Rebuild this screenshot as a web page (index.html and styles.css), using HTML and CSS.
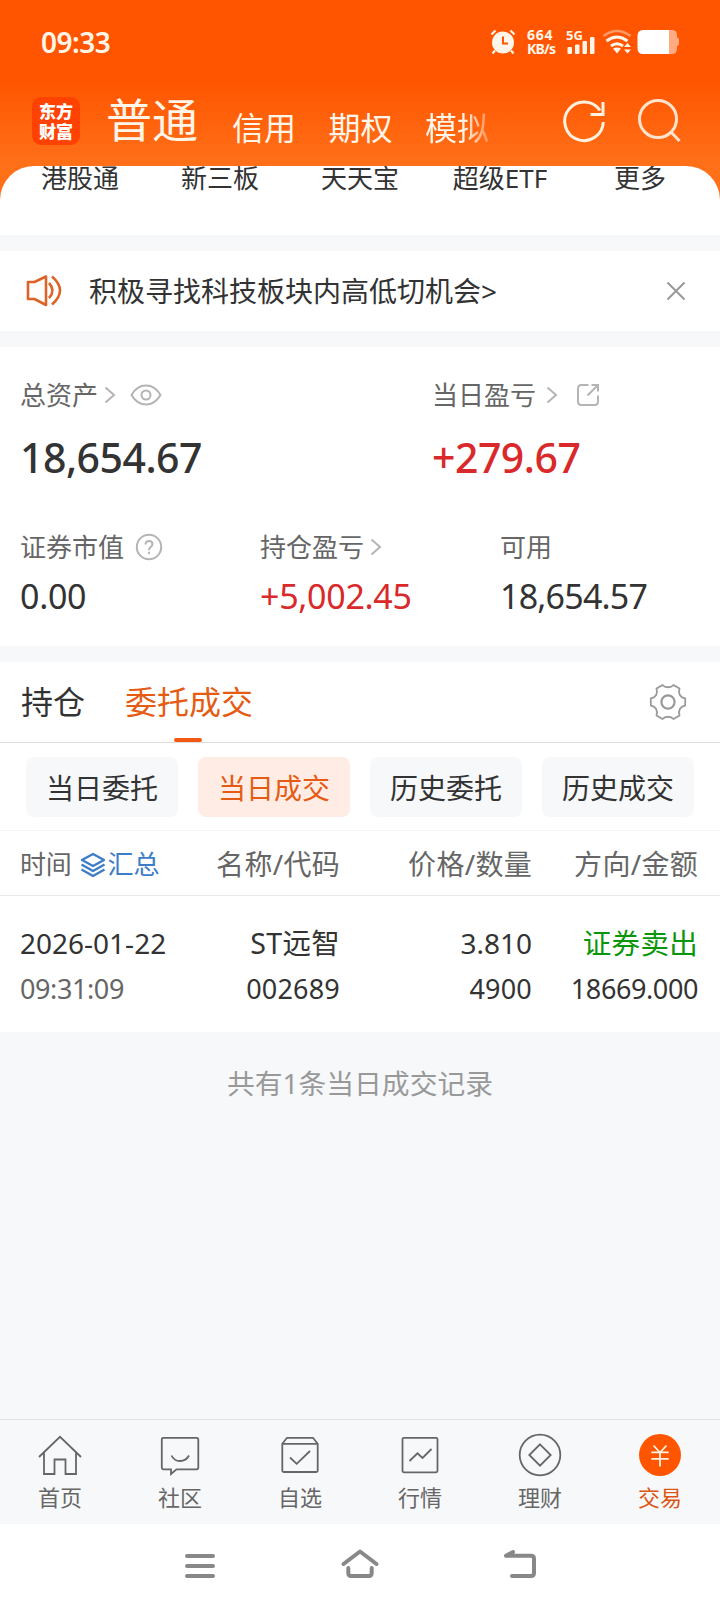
FILE: index.html
```html
<!DOCTYPE html>
<html lang="zh-CN">
<head>
    <meta charset="UTF-8">
    <title>交易</title>
    <link rel="stylesheet" href="styles.css">
</head>
<body>
    <div class="header">
        <div class="status">
            <span class="time">09:33</span>
            <svg class="alarm" width="26" height="26" viewBox="0 0 26 26">
                <circle cx="13" cy="13.5" r="11" fill="#fff5e8"/>
                <path d="M1.500 5.500L5.500 1.500M20.500 1.500L24.500 5.500M5 21.500L2.500 24.500M21 21.500L23.500 24.500" stroke="#fff5e8" stroke-width="2.200"/>
                <path d="M13 7.500V14.500H18" fill="none" stroke="#ff5500" stroke-width="2"/>
            </svg>
            <div class="speed"><b>664</b><b>KB/s</b></div>
            <div class="signal">
                <b>5G</b>
                <svg width="30" height="26" viewBox="0 0 30 26" fill="#fff5e8">
                    <rect x="1.500" y="18" width="4.500" height="7" rx="1"/>
                    <rect x="9" y="15.500" width="4.500" height="9.500" rx="1"/>
                    <rect x="16.500" y="12" width="4.500" height="13" rx="1"/>
                    <rect x="24" y="8" width="4.500" height="17" rx="1"/>
                </svg>
            </div>
            <svg class="wifi" width="30" height="26" viewBox="0 0 30 26" fill="none" stroke="#fff5e8" stroke-width="3">
                <path d="M1.500 7Q15 -3 28.500 7" stroke="#ff9a66" stroke-width="2.500"/>
                <path d="M4.500 12Q15 4 25.500 12M9 17Q15 12.500 21 17"/>
                <path d="M11 19.500Q15 17.500 19 19.500L15 24.500Z" fill="#fff5e8" stroke="none"/>
                <path d="M22 18L25.500 14L29 18ZM22 20.500L25.500 24.500L29 20.500Z" fill="#fff5e8" stroke="none"/>
            </svg>
            <svg class="battery" width="43" height="26" viewBox="0 0 43 26">
                <path d="M32 1H35Q40 1 40 6V8.500Q42 8.500 42 10.500V15Q42 17 40 17V20Q40 25 35 25H32Z" fill="#ffaa80"/>
                <path d="M6 1H32V25H6Q0.500 25 0.500 19V7Q0.500 1 6 1Z" fill="#fff"/>
            </svg>
        </div>
        <div class="topbar">
            <div class="logo"><span>东方</span><span>财富</span></div>
            <div class="accounts">
                <a class="current">普通</a>
                <a>信用</a>
                <a>期权</a>
                <a class="fade">模拟</a>
            </div>
            <svg class="refresh" width="48" height="48" viewBox="0 0 48 48" fill="none" stroke="#fff1e0" stroke-width="3">
                <path d="M43.300 25A19.300 19.300 0 1 1 40 13.500"/>
                <path d="M43 5V17.500H30.500"/>
            </svg>
            <svg class="search" width="48" height="48" viewBox="0 0 48 48" fill="none" stroke="#ffe3cc" stroke-width="3">
                <circle cx="22" cy="22" r="18.500"/>
                <path d="M34.500 34.500L43.500 44"/>
            </svg>
        </div>
    </div>

    <div class="menu">
        <a>港股通</a><a>新三板</a><a>天天宝</a><a>超级ETF</a><a>更多</a>
    </div>

    <div class="notice">
        <svg width="38" height="34" viewBox="0 0 38 34" fill="none" stroke="#dc6428" stroke-width="2.600" stroke-linejoin="round">
            <path d="M2 8H8.500L20 2.500V31L8.500 25H2Z"/>
            <path d="M23 9Q30 16.500 23 24M26 2.500Q42 16.500 26 30.500"/>
        </svg>
        <p>积极寻找科技板块内高低切机会&gt;</p>
        <svg width="20" height="20" viewBox="0 0 20 20" stroke="#999" stroke-width="2">
            <path d="M1.500 1.500L18.500 18.500M18.500 1.500L1.500 18.500"/>
        </svg>
    </div>

    <div class="assets">
        <div class="total">
            <div>
                <h3>总资产
                    <svg class="arrow near" width="12" height="18" viewBox="0 0 12 18"><path d="M1.500 1.500L10 9L1.500 16.500"/></svg>
                    <svg class="eye" width="32" height="22" viewBox="0 0 32 22"><path d="M1.500 11Q7 1.500 16 1.500T30.500 11Q25 20.500 16 20.500T1.500 11Z"/><circle cx="16" cy="11" r="4.500"/></svg>
                </h3>
                <p>18,654.67</p>
            </div>
            <div>
                <h3>当日盈亏
                    <svg class="arrow" width="12" height="18" viewBox="0 0 12 18"><path d="M1.500 1.500L10 9L1.500 16.500"/></svg>
                    <svg class="share" width="24" height="24" viewBox="0 0 24 24"><path d="M12.500 2H5.500Q2 2 2 5.500V18.500Q2 22 5.500 22H18.500Q22 22 22 18.500V12.500M11.500 12.500L21.500 2.500M15.500 2H22V8.500"/></svg>
                </h3>
                <p class="red">+279.67</p>
            </div>
        </div>
        <div class="detail">
            <div>
                <h3>证券市值
                    <svg class="help" width="28" height="28" viewBox="0 0 28 28"><circle cx="14" cy="14" r="12.200"/><path d="M10.500 11.500Q10.500 8 14 8T17.500 11.300C17.500 14 14 13.700 14 17.200M14 18.800V21"/></svg>
                </h3>
                <p>0.00</p>
            </div>
            <div>
                <h3>持仓盈亏
                    <svg class="arrow near" width="12" height="18" viewBox="0 0 12 18"><path d="M1.500 1.500L10 9L1.500 16.500"/></svg>
                </h3>
                <p class="red">+5,002.45</p>
            </div>
            <div>
                <h3>可用</h3>
                <p>18,654.57</p>
            </div>
        </div>
    </div>

    <div class="tabs">
        <a>持仓</a>
        <a class="on">委托成交</a>
        <svg width="40" height="40" viewBox="0 0 40 40" fill="none" stroke="#999" stroke-width="1.800" stroke-linejoin="round">
            <circle cx="20" cy="20" r="6.600" stroke-width="2.200"/>
            <path d="M14.500 3C17 6 23 6 25.500 3L31.500 6.500C30 11.500 32 15.500 37.200 16.500V23.500C32 24.500 30 28.500 31.500 33.500L25.500 37C23 34 17 34 14.500 37L8.500 33.500C10 28.500 8 24.500 2.800 23.500V16.500C8 15.500 10 11.500 8.500 6.500Z"/>
        </svg>
    </div>

    <div class="filters">
        <a>当日委托</a><a class="on">当日成交</a><a>历史委托</a><a>历史成交</a>
    </div>

    <div class="grid thead">
        <div class="when">时间
            <span class="sum">
                <svg width="26" height="26" viewBox="0 0 26 26" fill="none" stroke="#3d7dc8" stroke-width="2.400" stroke-linejoin="round">
                    <path d="M13 2L24 8L13 14L2 8ZM1.500 12.500L13 19L24.500 12.500M1.500 17.500L13 24L24.500 17.500"/>
                </svg>汇总</span>
        </div>
        <div>名称/代码</div>
        <div>价格/数量</div>
        <div>方向/金额</div>
    </div>
    <div class="grid deal">
        <div><p class="date">2026-01-22</p><p class="gray">09:31:09</p></div>
        <div><p class="name">ST远智</p><p class="num">002689</p></div>
        <div><p class="price">3.810</p><p class="num">4900</p></div>
        <div><p class="green">证券卖出</p><p>18669.000</p></div>
    </div>
    <p class="count">共有1条当日成交记录</p>

    <div class="tabbar">
        <a><svg viewBox="0 0 48 48"><path d="M3 26L24 5.800L45 26M8 22V43H18.500V28.500H29.500V43H40V22"/></svg>首页</a>
        <a><svg viewBox="0 0 48 48"><path d="M7.500 6.800H40.500Q42.300 6.800 42.300 8.500V36.500Q42.300 38.300 40.500 38.300H20.500L15 43V38.300H7.500Q5.800 38.300 5.800 36.500V8.500Q5.800 6.800 7.500 6.800ZM15.500 24.500Q18 30 24 30T33 24.500"/></svg>社区</a>
        <a><svg viewBox="0 0 48 48"><path d="M6.300 12.800L11 6.800H37L41.700 12.800V39.500Q41.700 41 40 41H8Q6.300 41 6.300 39.500ZM6.300 12.800H41.700M14 26.500L20.700 32.800L34 20"/></svg>自选</a>
        <a><svg viewBox="0 0 48 48"><rect x="6.500" y="6.800" width="35" height="34.500" rx="1.500"/><path d="M13.500 30L21.500 22.300L26.500 27L35.500 18"/></svg>行情</a>
        <a><svg viewBox="0 0 48 48"><circle cx="24" cy="24" r="20.300"/><path d="M24 13.300L34.700 24L24 34.700L13.300 24Z"/></svg>理财</a>
        <a class="on"><svg viewBox="0 0 48 48"><circle cx="24" cy="24" r="21"/><path d="M17.500 14.500L24 21.500L30.500 14.500M24 21.500V35.500M15.300 21.300H32.700M15.300 27.800H32.700"/></svg>交易</a>
    </div>
    <div class="navbar">
        <svg viewBox="0 0 48 48"><path d="M11 14H37M11 24H37M11 34H37"/></svg>
        <svg viewBox="0 0 48 48"><path d="M7.500 22L24 9.500L40.500 22M12.300 26V31Q12.300 34 15.300 34H32.700Q35.700 34 35.700 31V26"/></svg>
        <svg viewBox="0 0 48 48"><path d="M17 10L10 13.800H35Q38 13.800 38 16.800V31Q38 34 35 34H16"/></svg>
    </div>
</body>
</html>
```
FILE: styles.css
```css
body, h3, p{margin: 0;padding: 0;font-weight: 400;}
body{display: flex;flex-direction: column;width: 720px;height: 1608px;overflow: hidden;background: #f7f8fa;color: #333;font-family: "Noto Sans", "Noto Sans CJK SC", sans-serif;}
svg{display: block;flex: none;}

/* header */
.header{height: 200px;flex: none;background: linear-gradient(#ff5500 80px, #ff7019 166px);color: #fff5e8;}
.status{display: flex;align-items: center;height: 84px;padding-left: 41px;}
.time{width: 449px;font-size: 28px;line-height: 82px;font-weight: 600;letter-spacing: -0.5px;}
.speed{flex: none;width: 32px;margin-left: 11px;font-size: 14px;line-height: 14px;}
.speed b{display: block;font-weight: 700;}
.speed b:first-child{letter-spacing: 0.8px;}
.speed b:last-child{letter-spacing: -0.8px;}
.signal{position: relative;margin-left: 7px;}
.signal b{position: absolute;left: 0;top: -1px;font-size: 13px;line-height: 14px;}
.wifi{margin-left: 6px;}
.battery{margin-left: 5px;}
.topbar{display: flex;align-items: center;height: 74px;padding-left: 32px;}
.logo{display: flex;flex: none;flex-direction: column;justify-content: center;width: 48px;height: 48px;border-radius: 9px;background: #ff4200;text-align: center;font: 900 17px/20px "Noto Sans CJK SC", sans-serif;color: #fff;}
.accounts{display: flex;flex: none;gap: 32.5px;width: 407px;margin-left: 26px;padding-top: 14px;}
.accounts a{font-size: 32px;line-height: 92px;}
.accounts .current{margin-right: 1.5px;font-size: 46px;line-height: 75px;}
.fade{-webkit-mask-image: linear-gradient(90deg, #000 60%, rgba(0,0,0,.3));mask-image: linear-gradient(90deg, #000 60%, rgba(0,0,0,.3));}
.refresh{margin: 0 0 1px 47px;}
.search{margin: 0 0 1px 28px;}

.menu{display: flex;flex: none;height: 69px;margin-top: -34px;padding: 0 10px;border-radius: 34px 34px 0 0;background: #fff;overflow: hidden;}
.menu a{width: 140px;text-align: center;font-size: 26px;line-height: 25px;}

.notice{display: flex;align-items: center;flex: none;height: 80px;margin: 16px 0;padding: 0 34px 0 26px;background: #fff;}
.notice p{flex: 1;margin-left: 25px;font-size: 28px;line-height: 82px;}

/* assets */
.assets{flex: none;height: 299px;background: #fff;}
.assets h3{display: flex;align-items: center;height: 36px;font-size: 26px;line-height: 36px;color: #666;}
.assets svg{fill: none;stroke: #b4b4b4;stroke-width: 2;}
.arrow{margin-left: 10px;}
.near{margin-left: 6px;}
.eye{margin-left: 14px;}
.share{margin-left: 18px;}
.help{margin-left: 11px;}
.total{display: flex;padding: 30px 0 0 20px;}
.total div{flex: none;width: 412px;}
.total div:last-child{width: 280px;}
.total p{margin-top: 15px;font-size: 41px;line-height: 58px;font-weight: 500;letter-spacing: -0.5px;}
.detail{display: flex;padding: 43px 0 0 20px;}
.detail div{flex: none;width: 240px;}
.detail div:last-child{width: 200px;}
.detail p{margin-top: 8px;font-size: 34px;line-height: 46px;letter-spacing: -0.3px;}
.detail div:last-child p{letter-spacing: -0.8px;}
.assets .red{color: #d9292b;}

/* tabs */
.tabs{display: flex;align-items: center;flex: none;gap: 40px;height: 80px;margin-top: 16px;padding: 0 32px 0 21px;border-bottom: 1px solid #ddd;background: #fff;font-size: 32px;line-height: 82px;}
.tabs svg{margin-left: auto;}
.tabs .on{position: relative;color: #e55b13;}
.tabs .on:after{content: "";position: absolute;left: 49px;bottom: 1px;width: 28px;height: 4px;border-radius: 2px;background: #f25a14;}
.filters{display: flex;flex: none;gap: 20px;height: 60px;padding: 14px 26px 13px;border-bottom: 1px solid #f5f5f7;background: #fff;}
.filters a{width: 152px;border-radius: 8px;background: #f7f8fa;text-align: center;font-size: 28px;line-height: 63px;}
.filters .on{background: #ffede5;color: #e55b13;}

/* deals */
.grid{display: grid;flex: none;grid-template-columns: 180px 140px 192px 166px;padding: 0 22px 0 20px;background: #fff;text-align: right;}
.grid div:first-child{text-align: left;}
.thead{height: 64px;border-bottom: 1px solid #eaeaec;font-size: 28px;line-height: 67px;letter-spacing: 0.3px;color: #666;}
.when{display: flex;font-size: 26px;letter-spacing: -0.2px;}
.sum{display: flex;align-items: center;height: 67px;margin-left: 8px;color: #3d7dc8;}
.sum svg{margin-right: 2px;}
.deal{height: 112px;padding-top: 24px;font-size: 27px;line-height: 46px;letter-spacing: -0.4px;}
.deal .date, .deal .price{font-size: 28px;letter-spacing: 0;}
.deal .name, .deal .green{font-size: 28.5px;letter-spacing: 0.3px;}
.deal .num{letter-spacing: 0.2px;}
.gray{color: #666;}
.green{color: #0a960a;}
.count{flex: 1;text-align: center;font-size: 27.8px;line-height: 103px;color: #999;}

/* bottom */
.tabbar{display: flex;flex: none;height: 104px;border-top: 1px solid #dfe1e4;background: #f7f8fa;}
.tabbar a{width: 120px;padding-top: 11px;text-align: center;font-size: 22px;line-height: 37px;color: #666;}
.tabbar svg{width: 48px;height: 48px;margin: 0 auto;fill: none;stroke: #666;stroke-width: 1.800;}
.tabbar .on{color: #dc5514;}
.tabbar .on svg{stroke: #fff1e0;}
.tabbar .on circle{fill: #ff5500;stroke: none;}
.navbar{display: flex;flex: none;justify-content: center;align-items: center;gap: 112px;height: 84px;background: #fff;}
.navbar svg{width: 48px;height: 48px;fill: none;stroke: #888;stroke-width: 4;stroke-linecap: round;stroke-linejoin: round;}
```
